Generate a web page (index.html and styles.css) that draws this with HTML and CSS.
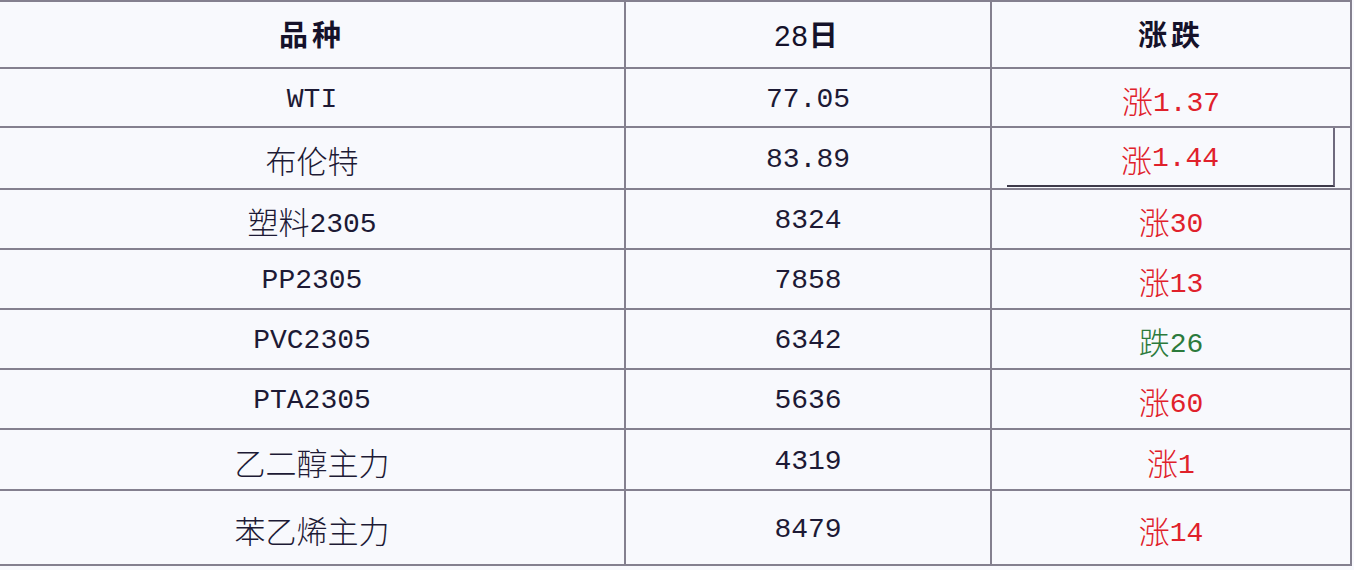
FILE: index.html
```html
<!DOCTYPE html>
<html lang="zh">
<head>
<meta charset="utf-8">
<title>品种 28日 涨跌</title>
<link rel="stylesheet" href="styles.css">
</head>
<body>
<table class="quotes">
  <colgroup>
    <col class="c-name">
    <col class="c-price">
    <col class="c-change">
  </colgroup>
  <thead>
    <tr class="r-head">
      <th>品种</th>
      <th><span class="hd-num">28</span>日</th>
      <th>涨跌</th>
    </tr>
  </thead>
  <tbody>
    <tr class="r-1">
      <td>WTI</td>
      <td>77.05</td>
      <td class="up"><span class="cn">涨</span>1.37</td>
    </tr>
    <tr class="r-2">
      <td><span class="cn">布伦特</span></td>
      <td>83.89</td>
      <td class="up boxed"><div class="box"><span class="cn">涨</span>1.44</div></td>
    </tr>
    <tr class="r-3">
      <td><span class="cn">塑料</span>2305</td>
      <td>8324</td>
      <td class="up"><span class="cn">涨</span>30</td>
    </tr>
    <tr class="r-4">
      <td>PP2305</td>
      <td>7858</td>
      <td class="up"><span class="cn">涨</span>13</td>
    </tr>
    <tr class="r-5">
      <td>PVC2305</td>
      <td>6342</td>
      <td class="down"><span class="cn">跌</span>26</td>
    </tr>
    <tr class="r-6">
      <td>PTA2305</td>
      <td>5636</td>
      <td class="up"><span class="cn">涨</span>60</td>
    </tr>
    <tr class="r-7">
      <td><span class="cn">乙二醇主力</span></td>
      <td>4319</td>
      <td class="up"><span class="cn">涨</span>1</td>
    </tr>
    <tr class="r-8">
      <td><span class="cn">苯乙烯主力</span></td>
      <td>8479</td>
      <td class="up"><span class="cn">涨</span>14</td>
    </tr>
  </tbody>
</table>
</body>
</html>
```

FILE: styles.css
```css
html, body {
  margin: 0;
  padding: 0;
  background: #f8f9fd;
}

.quotes {
  border-collapse: collapse;
  table-layout: fixed;
  width: 1351px;
  margin-top: 0;
  color: #1d1a35;
  font-family: "Liberation Mono", "Noto Sans CJK SC", monospace;
  font-size: 28px;
}

.c-name { width: 625px; }
.c-price { width: 366px; }
.c-change { width: 360px; }

.quotes th,
.quotes td {
  border: 2px solid #84808f;
  text-align: center;
  vertical-align: middle;
  padding: 0;
  white-space: nowrap;
}

.quotes td {
  padding-top: 3px;
}

.quotes th:first-child,
.quotes td:first-child {
  border-left: none;
}

.quotes th {
  font-family: "Noto Sans CJK SC", "Liberation Sans", sans-serif;
  font-weight: 700;
  font-size: 29px;
  letter-spacing: 4px;
  color: #15122a;
  padding-bottom: 4px;
}

.hd-num {
  font-family: "Liberation Sans", sans-serif;
  font-weight: 400;
  letter-spacing: 1px;
}

.cn {
  font-family: "Noto Sans CJK SC", sans-serif;
  font-weight: 300;
  font-size: 31px;
  vertical-align: -2px;
}

.r-head { height: 67px; }
.r-1 { height: 59px; }
.r-2 { height: 61px; }
.r-3 { height: 60px; }
.r-4 { height: 60px; }
.r-5 { height: 60px; }
.r-6 { height: 60px; }
.r-7 { height: 61px; }
.r-8 { height: 75px; }

.up { color: #e0212b; }
.down { color: #2c7a3c; }

.quotes td.boxed {
  padding: 0 15px 1px 15px;
}

.box {
  display: flex;
  align-items: center;
  justify-content: center;
  height: 59px;
  padding-top: 3px;
  border-right: 2px solid #6f6a7e;
  border-bottom: 2px solid #3d3a4a;
  box-sizing: border-box;
}
```
